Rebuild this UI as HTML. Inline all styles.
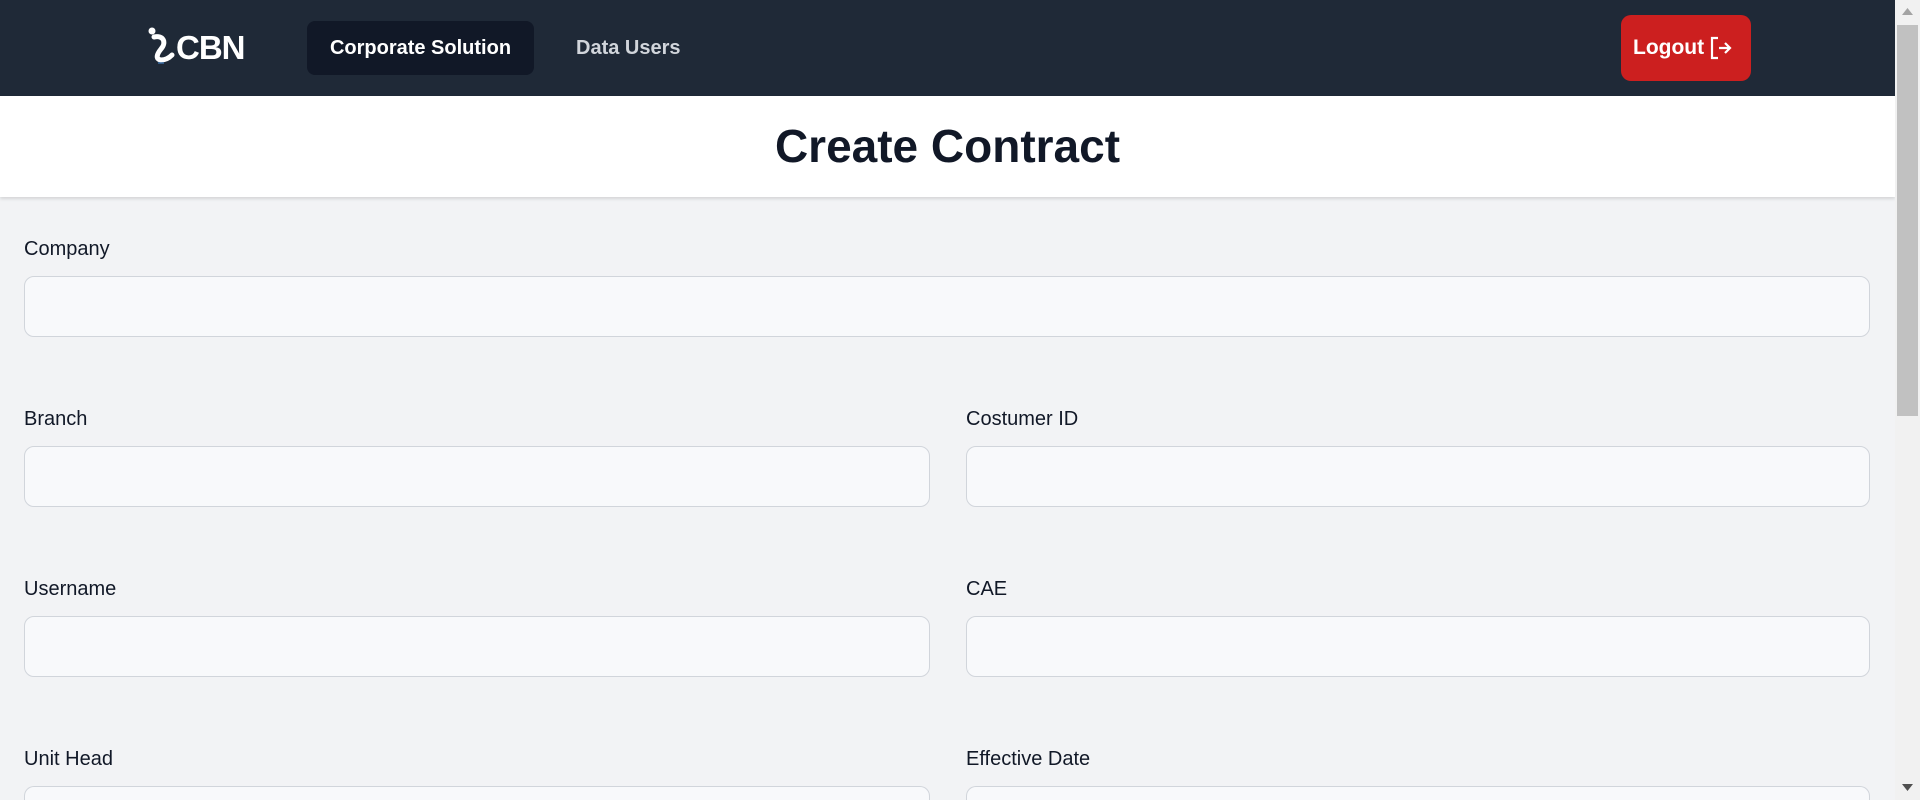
<!DOCTYPE html>
<html><head><meta charset="utf-8"><style>
*{box-sizing:border-box;margin:0;padding:0}
html,body{width:1920px;height:800px;overflow:hidden;background:#f2f3f5;font-family:"Liberation Sans",sans-serif;color:#111827}
#w{position:relative;width:1920px;height:800px;overflow:hidden}
.nav{position:absolute;left:0;top:0;width:1895px;height:96px;background:#1f2937}
.logo{position:absolute;left:148px;top:27px;width:100px;height:40px}
.logo span{position:absolute;left:28px;top:2px;color:#fff;font-weight:bold;font-size:33px;letter-spacing:-1px}
.btn{position:absolute;top:21px;left:307px;width:227px;height:54px;background:#111827;border-radius:8px;color:#fff;font-weight:bold;font-size:20px;line-height:54px;text-align:center}
.du{position:absolute;left:576px;top:21px;line-height:54px;color:#d1d5db;font-weight:bold;font-size:20px}
.lo{position:absolute;left:1621px;top:15px;width:130px;height:66px;background:#cc1f1f;border-radius:10px;color:#fff;font-size:21px;line-height:66px;padding-left:12px;font-weight:bold}
.lo svg{position:absolute;left:88px;top:21px}
.head{position:absolute;left:0;top:96px;width:1895px;height:101px;background:#fff;box-shadow:0 2px 3px rgba(0,0,0,.12);text-align:center;font-weight:bold;font-size:46px;line-height:101px}
.lbl{position:absolute;font-size:20px}
.in{position:absolute;height:61px;background:#f8f9fb;border:1px solid #d1d5db;border-radius:10px}
.in.b{height:14px;border-bottom:none;border-radius:10px 10px 0 0}
.sb{position:absolute;left:1895px;top:0;width:25px;height:800px;background:#f1f1f1}
.th{position:absolute;left:2px;top:25px;width:21px;height:391px;background:#c1c1c1}
</style></head><body><div id="w">
<div class="nav">
<div class="logo"><svg width="30" height="40" viewBox="0 0 30 40"><circle cx="4" cy="4" r="3.5" fill="#fff"/><path d="M6 10C15 8 19 15 13 22 9 27 7 32 13 33 17 33 21 31 24 28" stroke="#fff" stroke-width="5" fill="none" stroke-linecap="round"/><path d="M10 36h6" stroke="#3b6ea5" stroke-width="1.5"/></svg><span>CBN</span></div>
<div class="btn">Corporate Solution</div>
<div class="du">Data Users</div>
<div class="lo">Logout<svg width="24" height="24" viewBox="0 0 24 24" fill="none" stroke="#fff" stroke-width="2.2"><path d="M9 2H3v20h6M10 12h11M16 7l5 5-5 5"/></svg></div>
</div>
<div class="head">Create Contract</div>
<div class="lbl" style="left:24px;top:238px">Company</div>
<div class="in" style="left:24px;top:276px;width:1846px"></div>
<div class="lbl" style="left:24px;top:408px">Branch</div>
<div class="in" style="left:24px;top:446px;width:906px"></div>
<div class="lbl" style="left:966px;top:408px">Costumer ID</div>
<div class="in" style="left:966px;top:446px;width:904px"></div>
<div class="lbl" style="left:24px;top:578px">Username</div>
<div class="in" style="left:24px;top:616px;width:906px"></div>
<div class="lbl" style="left:966px;top:578px">CAE</div>
<div class="in" style="left:966px;top:616px;width:904px"></div>
<div class="lbl" style="left:24px;top:748px">Unit Head</div>
<div class="in b" style="left:24px;top:786px;width:906px"></div>
<div class="lbl" style="left:966px;top:748px">Effective Date</div>
<div class="in b" style="left:966px;top:786px;width:904px"></div>
<div class="sb"><div class="th"></div>
<svg style="position:absolute;left:7px;top:8px" width="11" height="7"><path d="M0 7L5.5 0 11 7z" fill="#a3a3a3"/></svg>
<svg style="position:absolute;left:7px;top:784px" width="11" height="7"><path d="M0 0L5.5 7 11 0z" fill="#505050"/></svg></div>
</div></body></html>
